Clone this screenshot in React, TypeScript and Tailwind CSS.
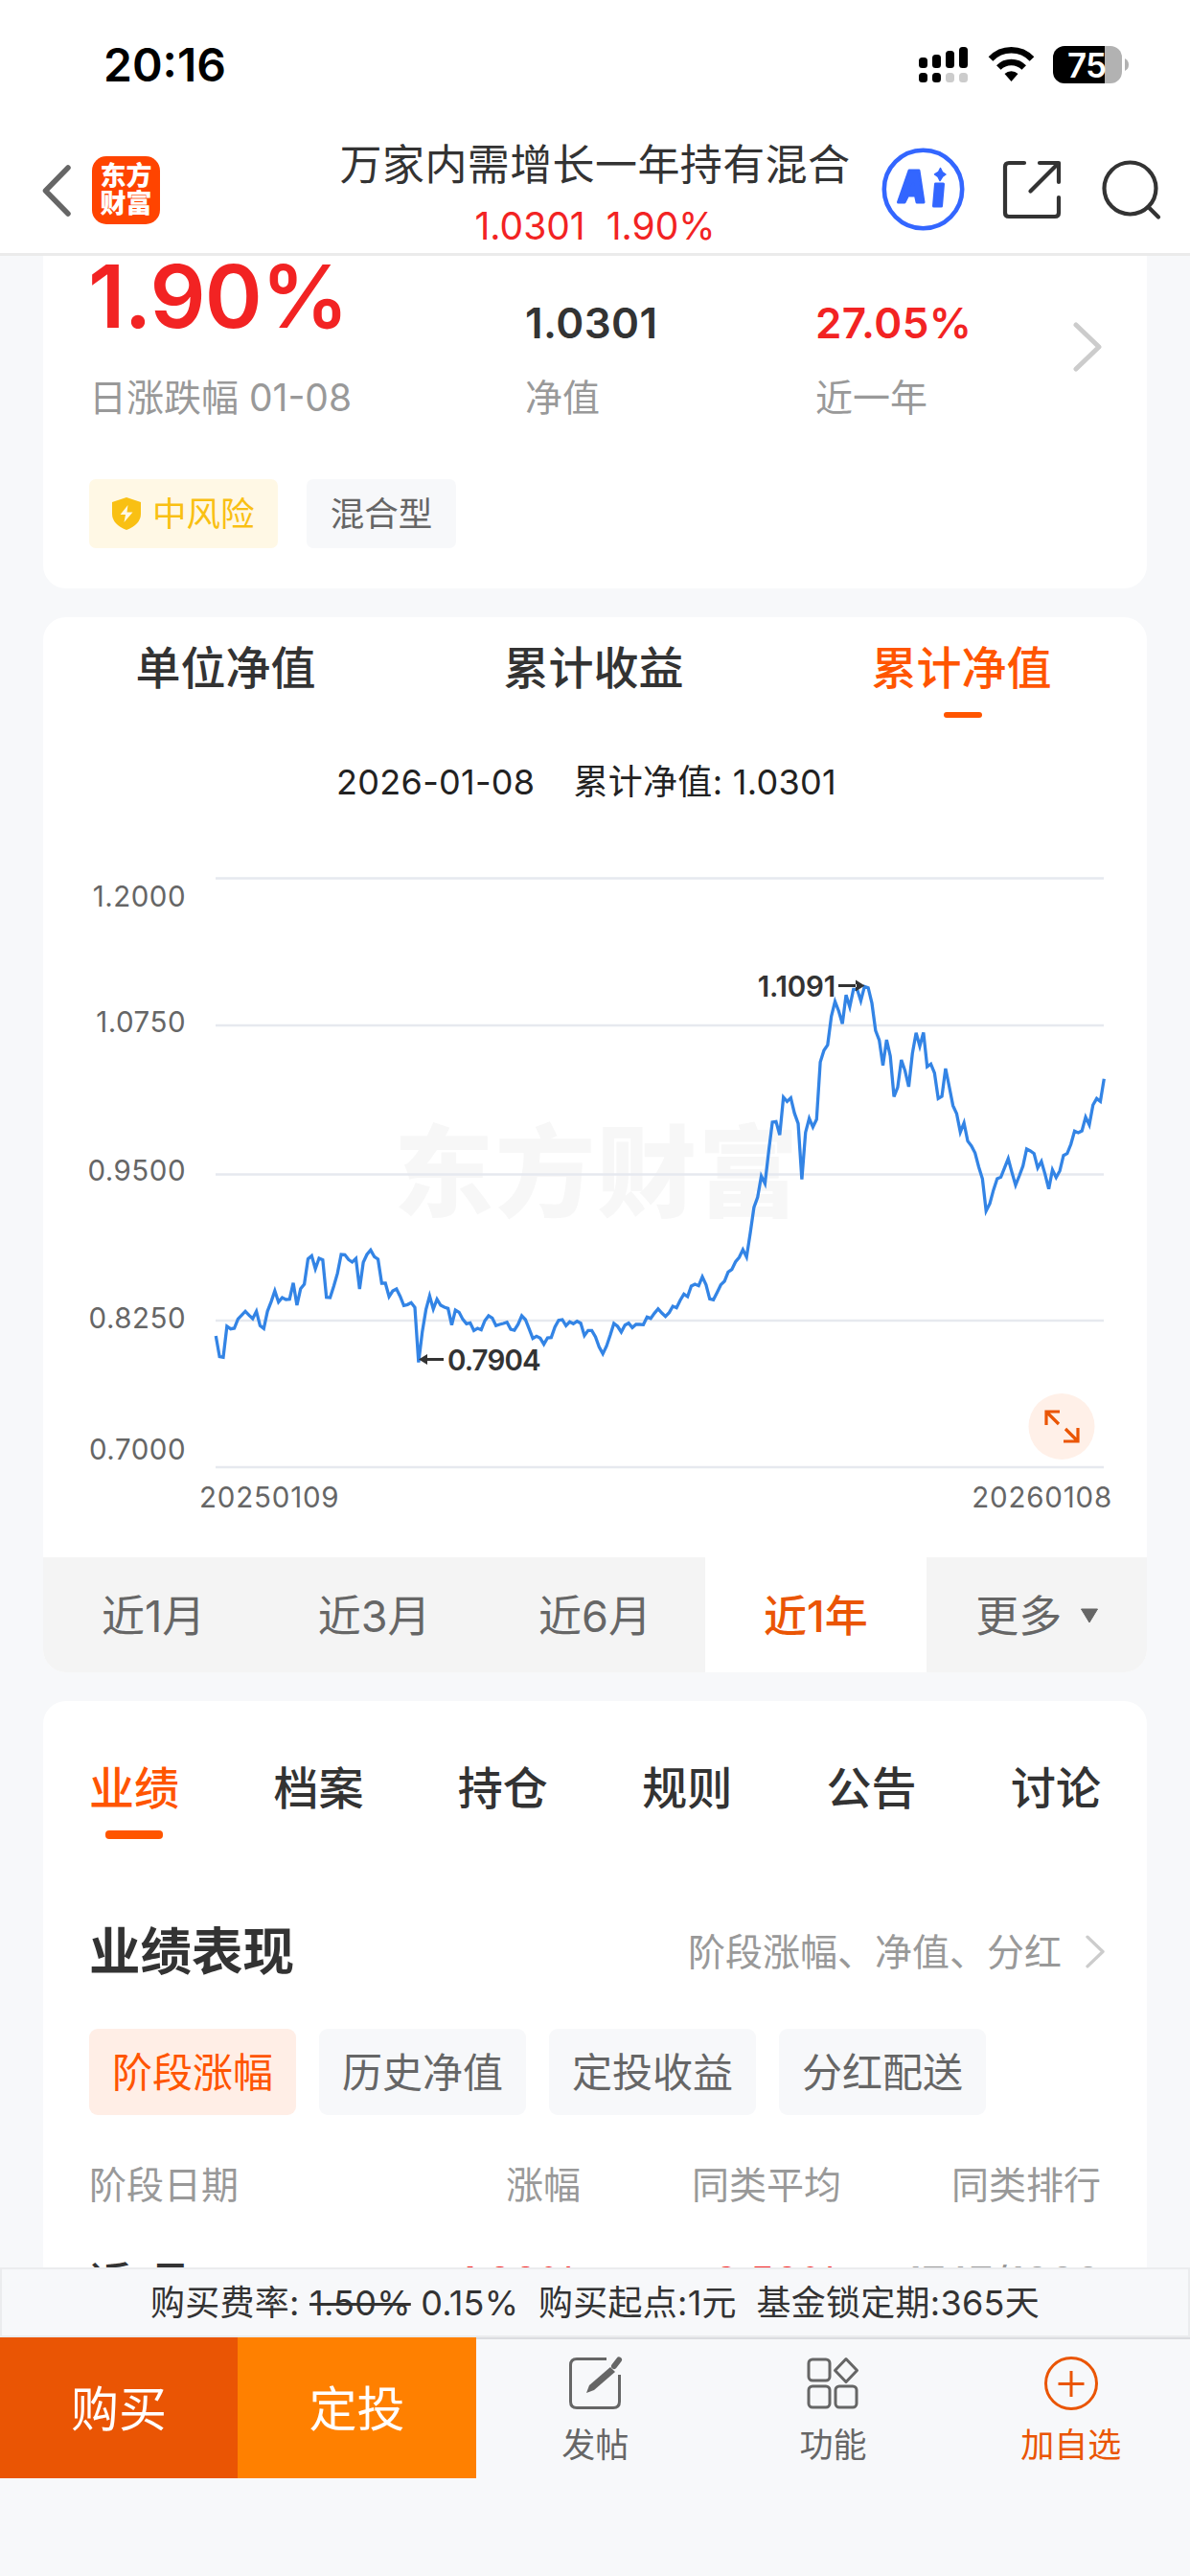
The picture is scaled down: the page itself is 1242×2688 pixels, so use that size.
import type { ReactNode } from 'react';
import clsx from 'clsx';

// Y positions of the cumulative NAV line, in thirds of a pixel
const trend = [
    1242, 1307, 1309, 1212, 1220, 1218, 1189, 1177, 1165, 1177, 1188, 1165, 1210, 1219, 1165, 1135, 1101, 1136, 1122, 1128,
    1127, 1076, 1146, 1094, 1080, 1001, 991, 1032, 999, 1004, 1121, 1122, 1086, 1046, 987, 988, 1003, 1011, 1000, 1095,
    1012, 987, 973, 994, 1002, 1077, 1077, 1119, 1101, 1095, 1118, 1147, 1144, 1138, 1153, 1325, 1230, 1160, 1117, 1158,
    1127, 1146, 1152, 1156, 1208, 1161, 1168, 1190, 1204, 1201, 1225, 1218, 1223, 1194, 1179, 1186, 1210, 1206, 1203, 1199,
    1221, 1224, 1206, 1179, 1191, 1220, 1250, 1243, 1249, 1268, 1248, 1247, 1214, 1193, 1191, 1210, 1198, 1204, 1196, 1202,
    1241, 1225, 1225, 1245, 1277, 1298, 1274, 1240, 1203, 1212, 1230, 1208, 1202, 1216, 1206, 1206, 1207, 1183, 1187, 1171,
    1157, 1170, 1181, 1169, 1149, 1154, 1130, 1111, 1119, 1086, 1080, 1085, 1057, 1082, 1126, 1129, 1106, 1082, 1071, 1042,
    1034, 1010, 996, 972, 995, 920, 840, 808, 742, 765, 665, 573, 571, 613, 495, 508, 497, 545, 577, 752,
    605, 561, 588, 564, 385, 348, 331, 242, 195, 225, 265, 175, 212, 157, 157, 193, 148, 152, 200, 286,
    316, 395, 315, 366, 493, 464, 378, 412, 462, 358, 293, 335, 292, 399, 391, 419, 499, 492, 405, 462,
    521, 546, 604, 575, 632, 647, 669, 713, 750, 851, 828, 785, 750, 745, 716, 687, 730, 770, 741, 710,
    657, 663, 671, 716, 696, 736, 782, 722, 746, 725, 677, 671, 642, 601, 606, 600, 557, 581, 519, 499,
    508, 437,
];

const plotLeft = 180.3;
const plotWidth = 927;
const trendPoints = trend
    .map((v, i) => `${(plotLeft + (i * plotWidth) / (trend.length - 1)).toFixed(2)},${(100 + v / 3).toFixed(2)}`)
    .join(' ');

const axis = [
    { label: '1.2000', line: 36.5, y: 66 },
    { label: '1.0750', line: 190, y: 197 },
    { label: '0.9500', line: 345.5, y: 352 },
    { label: '0.8250', line: 498, y: 506 },
    { label: '0.7000', line: 651, y: 642.5 },
];

const StatusBar = () => (
    <div className="flex h-[132px] items-center justify-between pl-[108px] pr-[64px] text-black">
        <span className="mt-[4px] text-[48px] font-semibold leading-none">20:16</span>
        <svg width="220" height="40" viewBox="0 0 220 40" className="mt-[3px]">
            <g fill="#000">
                <rect x="1" y="12" width="9" height="11" rx="3.5" />
                <rect x="15" y="9" width="9" height="14" rx="3.5" />
                <rect x="29" y="5" width="9" height="18" rx="3.5" />
                <rect x="43" y="1" width="9" height="22" rx="3.5" />
                <rect x="1" y="28" width="9" height="10" rx="3.5" />
                <rect x="15" y="28" width="9" height="10" rx="3.5" />
            </g>
            <g fill="#ccc">
                <rect x="29" y="28" width="9" height="10" rx="3.5" />
                <rect x="43" y="28" width="9" height="10" rx="3.5" />
            </g>
            <g fill="none" stroke="#000" strokeWidth="6.4">
                <path d="M76 13.500 A29.500 29.500 0 0 1 119 13.500" />
                <path d="M84.300 22.500 A18.500 18.500 0 0 1 110.700 22.500" />
            </g>
            <path d="M97.500 37 L90.500 29 A10.500 10.500 0 0 1 104.500 29 Z" fill="#000" />
            <clipPath id="battery">
                <rect x="141" y="0" width="72" height="39" rx="12" />
            </clipPath>
            <g clipPath="url(#battery)">
                <rect x="141" y="0" width="54" height="39" fill="#000" />
                <rect x="195" y="0" width="18" height="39" fill="#b2b2b2" />
            </g>
            <path d="M216 13 q4 2 4 6.500 t-4 6.500 Z" fill="#b2b2b2" />
            <text x="176" y="32.500" textAnchor="middle" fontSize="35" fontWeight="600" letterSpacing="-1" fill="#fff">
                75
            </text>
        </svg>
    </div>
);

const NavBar = () => (
    <div className="flex h-[132px] items-center">
        <div className="flex w-[355px] items-center pl-[43px]">
            <svg width="32" height="56" viewBox="0 0 32 56" className="mt-[1px]">
                <path d="M28 4 L4.500 28 L28 52" fill="none" stroke="#666" strokeWidth="5.500" strokeLinecap="round" strokeLinejoin="round" />
            </svg>
            <div className="ml-[21px] flex h-[71px] w-[71px] flex-col items-center justify-center rounded-[15px] bg-[#ff4400] text-[27px] font-black leading-[29px] text-white">
                <span>东方</span>
                <span>财富</span>
            </div>
        </div>
        <div className="flex w-[532px] flex-col items-center pt-[10px]">
            <div className="h-[54px] whitespace-nowrap text-[44px] leading-[54px] tracking-[0.4px] text-[#333]">万家内需增长一年持有混合</div>
            <div className="mt-[12px] h-[50px] whitespace-pre text-[39px] leading-[50px] text-[#f22323]">1.0301  1.90%</div>
        </div>
        <div className="flex flex-1 items-center pl-[33px]">
            <svg width="88" height="88" viewBox="0 0 88 88">
                <circle cx="43.500" cy="43.500" r="40.700" fill="#fff" stroke="#3366ff" strokeWidth="4.600" />
                <g fill="#3366ff" stroke="#3366ff" strokeWidth="3" strokeLinejoin="round">
                    <path fillRule="evenodd" d="M29 24 h10 l5 33 h-7 l-1.500 -7 h-8 l-3.500 7 h-6.500 Z M33 38 l-2.500 6 h3.500 Z" />
                    <path d="M56.500 38 h8 l-2 23 h-8 Z" />
                    <path strokeWidth="1.500" d="M61.500 21.500 l2 4 l3.500 2.500 l-3.500 2.500 l-2.500 4 l-2 -4 l-3.500 -2.500 l4 -2.500 Z" />
                </g>
            </svg>
            <svg width="62" height="62" viewBox="0 0 62 62" className="ml-[38px]">
                <g fill="none" stroke="#333" strokeWidth="4.200" strokeLinecap="round" strokeLinejoin="round">
                    <path d="M23 3 H7 Q3 3 3 7 V55 Q3 59 7 59 H55 Q59 59 59 55 V39" />
                    <path d="M39 3 H59 V23" />
                    <path d="M58 4 L29.500 32.500" />
                </g>
            </svg>
            <svg width="66" height="66" viewBox="0 0 66 66" className="ml-[40px]">
                <circle cx="31.500" cy="31.500" r="27" fill="none" stroke="#333" strokeWidth="4.200" />
                <path d="M50.500 51 L61 61.500" stroke="#333" strokeWidth="4.200" strokeLinecap="round" />
            </svg>
        </div>
    </div>
);

const Chevron = ({ className }: { className: string }) => (
    <svg viewBox="0 0 30 52" className={className}>
        <path d="M3 3 L27 26 L3 49" fill="none" stroke="#ccc" strokeWidth="5" strokeLinecap="round" strokeLinejoin="round" />
    </svg>
);

const Metric = ({ value, label, className }: { value: string; label: string; className: string }) => (
    <div className="flex flex-col">
        <div className={clsx('mt-[40px] h-[60px] text-[44px] font-semibold leading-[60px] tracking-[0.4px]', className)}>{value}</div>
        <div className="mt-[28px] h-[40px] text-[39px] leading-[40px] text-[#999]">{label}</div>
    </div>
);

const Summary = () => (
    <section className="h-[347px] shrink-0 rounded-b-[24px] bg-white px-[48px]">
        <div className="flex h-[168px]">
            <div className="w-[455px] shrink-0">
                <div className="-ml-[1px] h-[84px] text-[91px] font-semibold leading-[84px] tracking-[-1px] text-[#f22323]">1.90%</div>
                <div className="mt-[44px] h-[40px] text-[39px] leading-[40px] text-[#999]">日涨跌幅 01-08</div>
            </div>
            <div className="w-[303px] shrink-0">
                <Metric value="1.0301" label="净值" className="text-[#333]" />
            </div>
            <div className="w-[269px] shrink-0">
                <Metric value="27.05%" label="近一年" className="text-[#f22323]" />
            </div>
            <Chevron className="mt-[69px] h-[52px] w-[30px] shrink-0" />
        </div>
        <div className="mt-[65px] flex gap-[30px] text-[35.500px]">
            <div className="flex h-[72px] w-[197px] items-center rounded-[7px] bg-[#fff8e5] pl-[23px] text-[#f9c013]">
                <svg width="32" height="34" viewBox="0 0 32 34">
                    <path d="M16 0 L31 5 V17 Q31 28 16 34 Q1 28 1 17 V5 Z" fill="#f9c013" />
                    <path d="M17.500 8 L9.500 18 H15 L13.500 26 L22.500 15.500 H16.500 Z" fill="#fff8e5" />
                </svg>
                <span className="ml-[11px] pt-[2px] leading-none">中风险</span>
            </div>
            <div className="flex h-[72px] w-[156px] items-center justify-center rounded-[7px] bg-[#f7f8fa] pt-[2px] leading-none text-[#666]">混合型</div>
        </div>
    </section>
);

const Chart = () => (
    <svg width="1152" height="745" viewBox="0 0 1152 745" className="block">
        <text x="366" y="382" fontSize="104" fontWeight="900" letterSpacing="2" fill="#f7f7f7">
            东方财富
        </text>
        {axis.map((a) => (
            <g key={a.label}>
                <line x1="180" x2="1107" y1={a.line} y2={a.line} stroke="#e6e9ef" strokeWidth="2.500" />
                <text x="149" y={a.y} textAnchor="end" fontSize="29.500" letterSpacing="0.5" fill="#666">
                    {a.label}
                </text>
            </g>
        ))}
        <polyline points={trendPoints} fill="none" stroke="#3384e5" strokeWidth="3.300" strokeLinejoin="miter" />
        <g fill="#333" fontSize="29.500" fontWeight="600">
            <path d="M392 538.500 L401 533 V544 Z M400 537 H418 V540 H400 Z" />
            <text x="422" y="550" letterSpacing="-0.9">0.7904</text>
            <path d="M857.500 148.500 L848 142.500 V154.500 Z M830 147 H849 V150 H830 Z" />
            <text x="827" y="160" textAnchor="end" letterSpacing="-0.2">1.1091</text>
        </g>
        <g fill="#666" fontSize="29.500" letterSpacing="0.8">
            <text x="163" y="693">20250109</text>
            <text x="1116" y="693" textAnchor="end">20260108</text>
        </g>
        <circle cx="1063" cy="608.500" r="34.500" fill="#fff0e8" />
        <path d="M1047 607 V593 H1061 M1048 594 L1060 606 M1065 624 H1080 V610 M1079 623 L1067 611" fill="none" stroke="#ea5504" strokeWidth="3.200" />
    </svg>
);

const ranges = ['近1月', '近3月', '近6月', '近1年'];

const NavCard = () => (
    <section className="mt-[30px] h-[1101px] shrink-0 overflow-hidden rounded-[24px] bg-white">
        <div className="flex h-[106px] text-[47px] font-medium">
            {['单位净值', '累计收益', '累计净值'].map((t) => (
                <div key={t} className={clsx('flex flex-1 flex-col items-center', t === '累计净值' ? 'text-[#ff5500]' : 'text-[#333]')}>
                    <span className="mr-[3px] mt-[23px] h-[60px] leading-[60px]">{t}</span>
                    {t === '累计净值' && <span className="mt-[16px] h-[6px] w-[40px] rounded-full bg-[#ff5500]" />}
                </div>
            ))}
        </div>
        <div className="flex h-[130px] justify-center pr-[18px] pt-[41px] text-[36px] leading-[50px] tracking-[0.3px] text-[#222]">
            <span>2026-01-08</span>
            <span className="ml-[40px]">累计净值: 1.0301</span>
        </div>
        <Chart />
        <div className="grid h-[120px] grid-cols-5 bg-[#f4f4f4] text-[45px] text-[#666]">
            {ranges.map((r) => (
                <div
                    key={r}
                    className={clsx('flex items-center justify-center pt-[2px] leading-none', r === '近1年' && 'bg-white font-medium text-[#ea5504]')}
                >
                    {r}
                </div>
            ))}
            <div className="flex items-center justify-center pl-[2px] pt-[2px] leading-none">
                更多
                <svg width="20" height="16" viewBox="0 0 20 16" className="ml-[19px]">
                    <path d="M1.500 1 H18.500 L10 15 Z" fill="#666" stroke="#666" strokeLinejoin="round" />
                </svg>
            </div>
        </div>
    </section>
);

const Performance = () => (
    <section className="mt-[30px] h-[700px] shrink-0 rounded-t-[24px] bg-white px-[48px]">
        <div className="flex justify-between pt-[61px] text-[47px] font-medium text-[#333]">
            {['业绩', '档案', '持仓', '规则', '公告', '讨论'].map((t, i) => (
                <div key={t} className={clsx('flex h-[84px] flex-col items-center', i === 0 && 'text-[#ff5500]')}>
                    <span className="h-[60px] leading-[60px]">{t}</span>
                    {i === 0 && <span className="mt-[14px] h-[9px] w-[60px] rounded-[4px] bg-[#ff5500]" />}
                </div>
            ))}
        </div>
        <div className="-mr-[4px] mt-[76px] flex h-[80px] items-center">
            <h2 className="pt-[1px] text-[53.500px] font-semibold leading-none text-[#333]">业绩表现</h2>
            <span className="ml-auto text-[39px] leading-none text-[#999]">阶段涨幅、净值、分红</span>
            <Chevron className="ml-[25px] h-[35px] w-[20px]" />
        </div>
        <div className="mt-[41px] flex gap-[24px] text-[42px] text-[#666]">
            {['阶段涨幅', '历史净值', '定投收益', '分红配送'].map((t, i) => (
                <div
                    key={t}
                    className={clsx(
                        'flex h-[90px] w-[216px] items-center justify-center rounded-[9px] pt-[2px] leading-none',
                        i === 0 ? 'bg-[#ffeee6] text-[#ff5500]' : 'bg-[#f7f8fa]'
                    )}
                >
                    {t}
                </div>
            ))}
        </div>
        <div className="mt-[48px] flex h-[50px] text-[39px] leading-[50px] text-[#999]">
            <span className="w-[280px]">阶段日期</span>
            <span className="w-[233px] text-right">涨幅</span>
            <span className="w-[272px] text-right">同类平均</span>
            <span className="flex-1 text-right">同类排行</span>
        </div>
        <div className="mt-[45px] flex h-[60px] text-[43px] leading-[60px] text-[#f22323]">
            <span className="w-[280px] pt-[2px] text-[44px] font-medium text-[#333]">近1月</span>
            <span className="w-[231px] text-right">1.88%</span>
            <span className="w-[273px] text-right">3.58%</span>
            <span className="flex-1 text-right text-[#999]">1747/1888</span>
        </div>
    </section>
);

const Action = ({ label, active, children }: { label: string; active?: boolean; children: ReactNode }) => (
    <div className={clsx('flex flex-1 flex-col items-center border-t-2 border-[#dcdde0] pt-[17px] text-[35px]', active ? 'text-[#ea5504]' : 'text-[#666]')}>
        <svg width="58" height="58" viewBox="0 0 58 58" fill="none" stroke="currentColor" strokeWidth="3">
            {children}
        </svg>
        <span className="mt-[13px] h-[44px] leading-[44px]">{label}</span>
    </div>
);

const BottomBar = () => (
    <footer className="h-[322px]">
        <div className="flex h-[73px] items-center justify-center whitespace-pre border-2 border-[#ebecee] text-[36px] tracking-[0.25px] text-[#333]">
            <span>购买费率: </span>
            <span className="line-through decoration-[3px]">1.50%</span>
            <span> 0.15%  购买起点:1元  基金锁定期:365天</span>
        </div>
        <div className="flex h-[147px]">
            <button className="w-[248px] bg-[#ea5504] pt-[3px] text-[50px] text-white">购买</button>
            <button className="w-[249px] bg-[#ff8000] pt-[3px] text-[50px] text-white">定投</button>
            <Action label="发帖">
                <path d="M41 3.500 H10 Q3.500 3.500 3.500 10 V48 Q3.500 54.500 10 54.500 H48 Q54.500 54.500 54.500 48 V20" />
                <path d="M49 11 L54 4.500" strokeWidth="6" strokeLinecap="round" />
                <path d="M45 12 L50 17 L28 36 L20 39 L23 31 Z" fill="currentColor" stroke="none" />
            </Action>
            <Action label="功能">
                <rect x="4" y="4" width="22" height="22" rx="4" />
                <rect x="4" y="32" width="22" height="22" rx="4" />
                <rect x="32" y="32" width="22" height="22" rx="4" />
                <path d="M43 3.500 L54.500 15.500 L43 27.500 L31.500 15.500 Z" strokeLinejoin="round" />
            </Action>
            <Action label="加自选" active>
                <circle cx="29" cy="29" r="26.500" />
                <path d="M15.500 29.500 H42.500 M29 16 V43" />
            </Action>
        </div>
    </footer>
);

export default function App() {
    return (
        <div className="flex h-[2688px] w-[1242px] flex-col overflow-hidden bg-[#f7f8fa] font-['Inter','Noto_Sans_CJK_SC',sans-serif]">
            <header className="h-[267px] border-b-[3px] border-[#ebebeb] bg-white">
                <StatusBar />
                <NavBar />
            </header>
            <main className="flex h-[2099px] flex-col overflow-hidden px-[45px]">
                <Summary />
                <NavCard />
                <Performance />
            </main>
            <BottomBar />
        </div>
    );
}
